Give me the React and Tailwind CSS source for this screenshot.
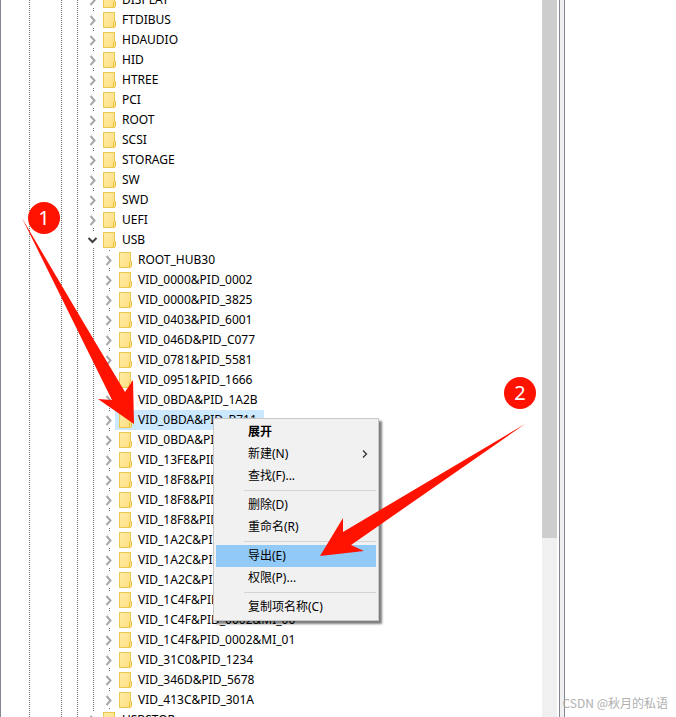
const DOTS = 'bg-[repeating-linear-gradient(to_bottom,#707070_0_1px,transparent_1px_2px)]';

const topKeys = [
  'DISPLAY', 'FTDIBUS', 'HDAUDIO', 'HID', 'HTREE', 'PCI', 'ROOT',
  'SCSI', 'STORAGE', 'SW', 'SWD', 'UEFI',
];

const usbKeys = [
  'ROOT_HUB30', 'VID_0000&PID_0002', 'VID_0000&PID_3825', 'VID_0403&PID_6001',
  'VID_046D&PID_C077', 'VID_0781&PID_5581', 'VID_0951&PID_1666', 'VID_0BDA&PID_1A2B',
  'VID_0BDA&PID_B711', 'VID_0BDA&PID_C821', 'VID_13FE&PID_4200', 'VID_18F8&PID_0F97',
  'VID_18F8&PID_0F97', 'VID_18F8&PID_0F97', 'VID_1A2C&PID_2124', 'VID_1A2C&PID_2124',
  'VID_1A2C&PID_2124', 'VID_1C4F&PID_0002', 'VID_1C4F&PID_0002&MI_00',
  'VID_1C4F&PID_0002&MI_01', 'VID_31C0&PID_1234', 'VID_346D&PID_5678', 'VID_413C&PID_301A',
];

const menuGroups = [
  [{ label: '展开', bold: true }, { label: '新建(N)', submenu: true }, { label: '查找(F)...' }],
  [{ label: '删除(D)' }, { label: '重命名(R)' }],
  [{ label: '导出(E)', active: true }, { label: '权限(P)...' }],
  [{ label: '复制项名称(C)' }],
];

// One indent level, with or without the dotted connector
const Guide = ({ line = true }) => (
  <span className="flex h-5 w-4 shrink-0 pl-2">
    {line && <span className={`h-full w-px ${DOTS}`} />}
  </span>
);

const FolderIcon = () => (
  <svg className="h-4 w-[14px] shrink-0" viewBox="0 0 14 16" aria-hidden="true">
    <defs>
      <linearGradient id="folder" x1="0" y1="0" x2="1" y2="1">
        <stop offset="0" stopColor="#ffeca8" />
        <stop offset="1" stopColor="#ffdf80" />
      </linearGradient>
    </defs>
    <rect x="0.5" y="0.5" width="11" height="15" fill="url(#folder)" stroke="#ecc850" />
    <path d="M10.5 15.5v-5l1-1h1v5l-1 1z" fill="#ffe394" stroke="#ecc23c" />
  </svg>
);

const Expander = ({ open, label }) => (
  <button
    type="button"
    aria-label={`${open ? 'Collapse' : 'Expand'} ${label}`}
    aria-expanded={open}
    className={`flex h-5 w-[14px] shrink-0 flex-col items-start ${DOTS} bg-[length:1px_100%] bg-[position:8px_0] bg-no-repeat`}
  >
    <span className="mt-0.5 h-4 w-[14px] bg-white">
      <svg className="h-4 w-[14px]" viewBox="0 0 14 16" fill="none" strokeWidth="2" aria-hidden="true">
        {open ? (
          <path d="M3.5 6l4 4 4-4" stroke="#404040" />
        ) : (
          <path d="M5.5 4l4 4.5-4 4.5" stroke="#a6a6a6" />
        )}
      </svg>
    </span>
  </button>
);

const TreeRow = ({ label, child, open, selected }) => (
  <li className="flex h-5 items-center">
    <Guide />
    <Guide line={false} />
    <Guide />
    <Guide />
    {child && <Guide />}
    <Expander open={open} label={label} />
    <span className={`flex h-5 items-center gap-0.5 pr-1 pl-1 ${selected ? 'bg-[#cce8ff]' : ''}`}>
      <FolderIcon />
      <span className="px-[3px] whitespace-nowrap">{label}</span>
    </span>
  </li>
);

const ContextMenu = () => (
  <div
    role="menu"
    className="absolute top-[418px] left-[212px] w-[166px] border border-[#c8c8c8] bg-[#f1f1f1] p-0.5 shadow-[3px_3px_2px_#00000080]"
  >
    {menuGroups.map((group, i) => (
      <div key={i}>
        {i > 0 && <hr className="my-[3px] ml-7 border-[#d4d4d4]" />}
        {group.map((item) => (
          <button
            key={item.label}
            type="button"
            role="menuitem"
            className={`flex h-[22px] w-full items-center justify-between pr-2 pl-8 ${
              item.active ? 'bg-[#91c9f7]' : ''
            } ${item.bold ? 'font-bold' : ''}`}
          >
            {item.label}
            {item.submenu && (
              <svg className="h-2 w-[6px]" viewBox="0 0 6 8" fill="none" aria-hidden="true">
                <path d="M1 0.5l3.5 3.5-3.5 3.5" stroke="#333" strokeWidth="1.3" />
              </svg>
            )}
          </button>
        ))}
      </div>
    ))}
  </div>
);

const Marker = ({ children, className }) => (
  <span
    className={`absolute flex h-8 w-8 items-center justify-center rounded-full bg-[#ff1200] text-xl text-white ${className}`}
  >
    {children}
  </span>
);

export default function App() {
  return (
    <main className="relative flex h-screen overflow-hidden border-l border-[#828790] bg-white font-['Noto_Sans','Noto_Sans_CJK_SC',sans-serif] text-xs text-black">
      <ul className="-mt-2.5 min-w-0 flex-1 pl-5">
        {topKeys.map((key) => (
          <TreeRow key={key} label={key} />
        ))}
        <TreeRow label="USB" open />
        {usbKeys.map((key, i) => (
          <TreeRow key={i} label={key} child selected={key === 'VID_0BDA&PID_B711'} />
        ))}
        <TreeRow label="USBSTOR" />
      </ul>

      {/* Scrollbar */}
      <div className="mr-0.5 w-[15px] shrink-0 bg-[#f0f0f0]">
        <div className="h-3/4 bg-[#cdcdcd]" />
      </div>

      {/* Splitter and value pane */}
      <div className="w-[6px] shrink-0 border-x border-[#828790] bg-[#f0f0f0]" />
      <div className="w-[111px] shrink-0" />

      <ContextMenu />

      <svg className="pointer-events-none absolute top-0 left-0 h-[717px] w-[675px]" viewBox="1 0 675 717" fill="#ff1200" aria-hidden="true">
        <path d="M22 218Q74 307 125 392L133 380 134 424 98 399 112 400z" />
        <path d="M525 424L343 532V518L320 556 364 551 351 545z" />
      </svg>
      <Marker className="top-[202px] left-[27px]">1</Marker>
      <Marker className="top-[377px] left-[503px]">2</Marker>

      <p className="absolute right-2 bottom-1.5 font-['Noto_Sans_CJK_SC',sans-serif] text-xs text-[#b0b0b0]">
        CSDN @秋月的私语
      </p>
    </main>
  );
}
